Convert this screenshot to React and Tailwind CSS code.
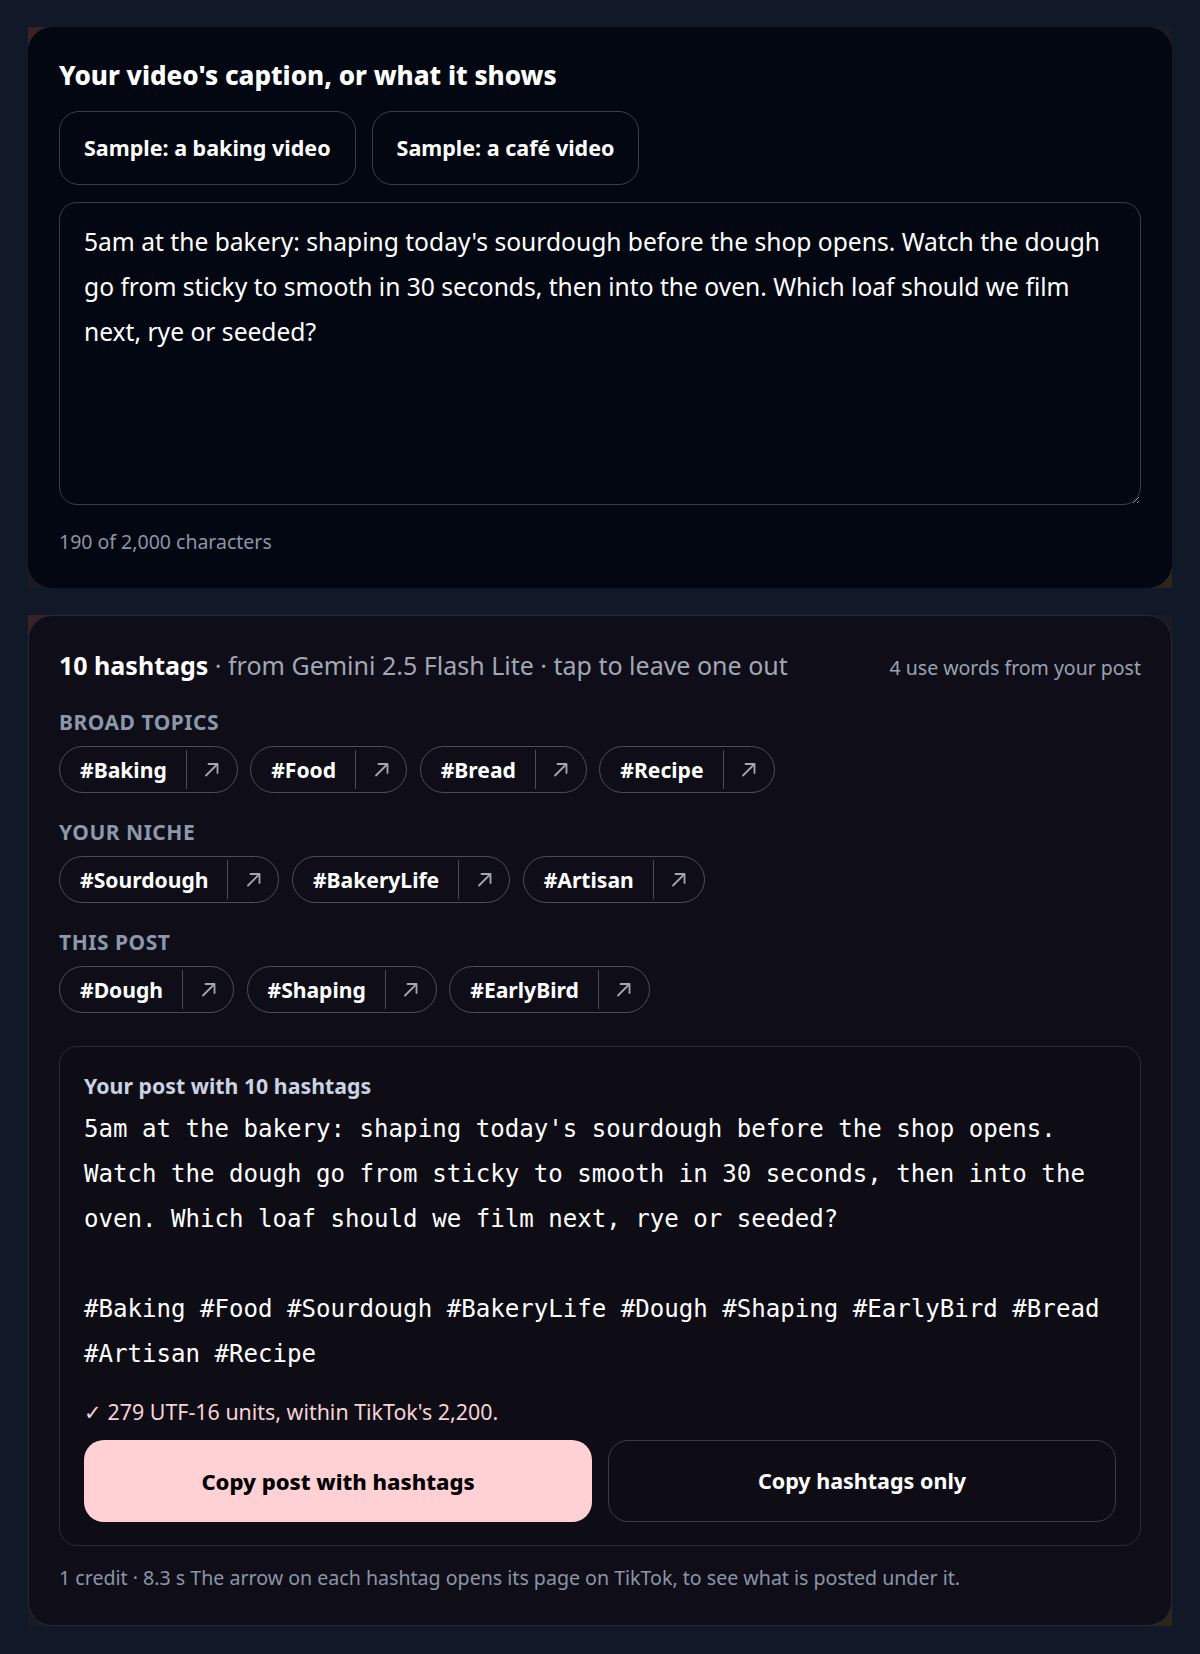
import React from "react";

const ui = { fontFamily: '"Noto Sans", "Open Sans", sans-serif' };
const mono = { fontFamily: '"DejaVu Sans Mono", "Liberation Mono", monospace' };

const caption =
  "5am at the bakery: shaping today's sourdough before the shop opens. Watch the dough go from sticky to smooth in 30 seconds, then into the oven. Which loaf should we film next, rye or seeded?";

const groups = [
  { label: "Broad topics", tags: ["#Baking", "#Food", "#Bread", "#Recipe"] },
  { label: "Your niche", tags: ["#Sourdough", "#BakeryLife", "#Artisan"] },
  { label: "This post", tags: ["#Dough", "#Shaping", "#EarlyBird"] },
];

function ArrowUpRight() {
  return (
    <svg width="15" height="15" viewBox="0 0 15 15" fill="none" stroke="currentColor" strokeWidth="1.8" strokeLinecap="round" strokeLinejoin="round">
      <path d="M2 13.5 13 2.5" />
      <path d="M4.5 2h9v9" />
    </svg>
  );
}

function Chip({ tag }) {
  return (
    <div className="flex h-[47px] items-stretch rounded-full border border-[#4a4e5a]">
      <button className="pl-[20px] pr-[19px] text-[21.1px] font-bold text-white">{tag}</button>
      <span className="my-[3px] w-px bg-[#4a4e5a]" />
      <button className="flex w-[50px] items-center justify-center text-[#a3a7b3]">
        <ArrowUpRight />
      </button>
    </div>
  );
}

function Frame({ children }) {
  return <div className="bg-gradient-to-br from-[#3a2128] via-[#1a1a24] to-[#2d2519]">{children}</div>;
}

export default function App() {
  return (
    <div className="min-h-screen bg-[#111827] px-[28px] pt-[27px] pb-[28px]" style={ui}>
      <div className="flex flex-col gap-[27px]">
        <Frame>
          <section className="rounded-3xl border border-[#030712] bg-[#030712] px-[30px] pt-[32px] pb-[33px]">
            <h2 className="text-[26px] font-extrabold leading-[30px] text-white">Your video's caption, or what it shows</h2>
            <div className="mt-[21px] flex gap-[16px]">
              <button className="h-[74px] rounded-[20px] border border-[#3a3e4a] px-[24px] text-[21.5px] font-bold text-white">
                Sample: a baking video
              </button>
              <button className="h-[74px] rounded-[20px] border border-[#3a3e4a] px-[24px] text-[21.5px] font-bold text-white">
                Sample: a café video
              </button>
            </div>
            <textarea
              readOnly
              defaultValue={caption}
              style={ui}
              className="mt-[17px] block h-[303px] w-full resize-y rounded-[18px] border border-[#3a3e4a] bg-transparent px-[24px] pt-[16px] text-[24.6px] leading-[45px] text-white outline-none"
            />
            <p className="mt-[25px] text-[19.5px] leading-[24px] text-[#8d95a6]">190 of 2,000 characters</p>
          </section>
        </Frame>

        <Frame>
          <section className="rounded-3xl border border-[#262a35] bg-[#0f0e18] px-[30px] pt-[34px] pb-[35px]">
            <div className="flex items-baseline justify-between">
              <p className="text-[25px] leading-[30px] text-[#a1a7b4]">
                <span className="font-bold text-white">10 hashtags</span> · from Gemini 2.5 Flash Lite · tap to leave one out
              </p>
              <p className="text-[19.5px] text-[#9aa2b1]">4 use words from your post</p>
            </div>

            <div className="mt-[28px] flex flex-col gap-[27px]">
              {groups.map((g) => (
                <div key={g.label}>
                  <h3 className="text-[21px] font-bold uppercase leading-[24px] tracking-wide text-[#8c97ab]">{g.label}</h3>
                  <div className="mt-[12px] flex flex-wrap gap-[12.5px]">
                    {g.tags.map((t) => (
                      <Chip key={t} tag={t} />
                    ))}
                  </div>
                </div>
              ))}
            </div>

            <div className="mt-[33px] rounded-[18px] border border-[#2a2d38] bg-[#0e0d16] px-[24px] pt-[26px] pb-[23px]">
              <h4 className="text-[21.3px] font-bold leading-[26px] text-[#cbd2e2]">Your post with 10 hashtags</h4>
              <pre className="mt-[8px] whitespace-pre-wrap text-[24.1px] leading-[45px] text-white" style={mono}>
                {caption + "\n\n#Baking #Food #Sourdough #BakeryLife #Dough #Shaping #EarlyBird #Bread #Artisan #Recipe"}
              </pre>
              <p className="mt-[22px] text-[21.4px] leading-[26px] text-[#f6d3d7]">✓ 279 UTF-16 units, within TikTok's 2,200.</p>
              <div className="mt-[15px] grid grid-cols-2 gap-[16px]">
                <button className="h-[82px] rounded-[20px] bg-[#ffd0d4] text-[22px] font-extrabold text-black">Copy post with hashtags</button>
                <button className="h-[82px] rounded-[20px] border border-[#3a3d48] text-[21.5px] font-bold text-white">Copy hashtags only</button>
              </div>
            </div>

            <p className="mt-[20px] text-[19.6px] leading-[24px] text-[#8b95a7]">
              1 credit · 8.3 s The arrow on each hashtag opens its page on TikTok, to see what is posted under it.
            </p>
          </section>
        </Frame>
      </div>
    </div>
  );
}
